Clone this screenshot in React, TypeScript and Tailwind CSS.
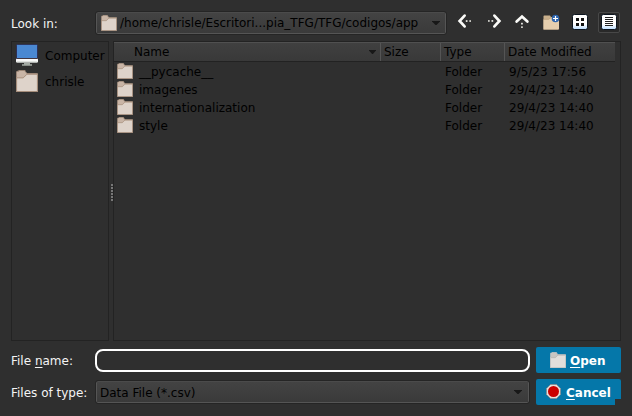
import React from "react";

function Folder({ size, light = false }: { size: number; light?: boolean }) {
  const edge = light ? "#c9c6c4" : "#a58d7b";
  return (
    <svg width={size} height={size} viewBox="0 0 16 16" className="block shrink-0">
      <path d="M.4 15.6V1.4Q.4.9 1 .9H2V.3H6.6V.9L8 2.6H15.6V15.6Z" fill={light ? "#c9c5c2" : "#c9b5a6"} stroke={edge} strokeWidth=".6" />
      <path d="M.7 6H5.3L8 3.4H15.4V15.4H.7Z" fill={light ? "#e2dedb" : "#ded3ca"} />
      <path d="M.7 5.7H5.2L7.9 3.1H15.5" fill="none" stroke={light ? "#b5b1ae" : "#a58d7b"} strokeWidth=".6" />
      <path d="M.4 5V15.6H15.6V3" fill="none" stroke={edge} strokeWidth=".8" />
    </svg>
  );
}

function Computer() {
  return (
    <svg width="22" height="22" viewBox="0 0 22 22" className="block shrink-0">
      <rect x=".5" y=".4" width="21" height="17" rx="1" fill="#4a88d2" stroke="#29264a" strokeWidth=".8" />
      <rect x="0" y="14.6" width="22" height="4" rx=".8" fill="#fafafa" />
      <rect x=".4" y="14" width="21.2" height=".9" fill="#37252c" />
      <path d="M.5 17.6H21.5L21 18.6H1Z" fill="#c8cec8" />
      <path d="M8 19H14V20.2H16V21.8H6V20.2H8Z" fill="#a4aba4" />
    </svg>
  );
}

function Arrow({ turn }: { turn: string }) {
  return (
    <svg width="16" height="16" viewBox="0 0 16 16" className={"block " + turn}>
      <path d="M7.6 2.6 2.6 8 7.6 13.4" fill="none" stroke="#fbfbf8" strokeWidth="2.7" strokeLinecap="round" />
      <rect x="8.8" y="7.2" width="1.7" height="1.7" fill="#f3f3ee" />
      <rect x="12.3" y="7.2" width="1.7" height="1.7" fill="#d8d8d2" />
    </svg>
  );
}

function NewFolder() {
  return (
    <svg width="17" height="16" viewBox="0 0 17 16" className="block">
      <path d="M.5 15.5V2.2Q.5 1.4 1.2 1.4H7L8 3H15.7V15.5Z" fill="#c9b08c" />
      <path d="M.5 15.5V5.5H5.8L8.4 3.8H16V14.6Q16 15.5 15 15.5Z" fill="#e5ceae" />
      <path d="M.6 5.3H5.7L8 3.6" stroke="#b69a77" strokeWidth=".6" fill="none" />
      <circle cx="12.5" cy="4.5" r="3.8" fill="#2d64ad" />
      <path d="M12.5 2V7M10 4.5H15" stroke="#fff" strokeWidth="1.2" />
    </svg>
  );
}

function ViewIcon({ detail = false }: { detail?: boolean }) {
  return (
    <svg width="16" height="16" viewBox="0 0 16 16" className="block">
      <defs>
        <linearGradient id={detail ? "pageDetail" : "pageGrid"} x1="0" y1="0" x2="0" y2="1">
          <stop offset=".65" stopColor="#fff" />
          <stop offset="1" stopColor="#b8dcff" />
        </linearGradient>
      </defs>
      <rect x=".5" y=".5" width="15" height="15" rx="1.8" fill={detail ? "url(#pageDetail)" : "url(#pageGrid)"} stroke="#0c151f" />
      {detail ? (
        <path d="M4 3.5H12M4 5.5H12M4 7.5H12M4 9.5H12M4 11.5H12" stroke="#222" />
      ) : (
        <path d="M4 4H7V7H4ZM9 4H12V7H9ZM4 9H7V12H4ZM9 9H12V12H9Z" fill="#111" />
      )}
    </svg>
  );
}

function Caret({ small = false }: { small?: boolean }) {
  return (
    <svg width={small ? 7 : 8} height="4" viewBox="0 0 8 4" preserveAspectRatio="none" className="block shrink-0">
      <path d="M0 0H8V.6L4.5 4H3.5L0 .6Z" fill="#181818" />
    </svg>
  );
}

const combo = "flex items-center rounded-[2px] border border-[#555] border-t-[#4b4b4b] bg-gradient-to-b from-[#434343] to-[#3a3a3a] outline outline-1 outline-[#252525] text-black";
const mnemonic = "underline decoration-1 underline-offset-2 [text-decoration-skip-ink:none]";

const rows = [
  ["__pycache__", "9/5/23 17:56"],
  ["imagenes", "29/4/23 14:40"],
  ["internationalization", "29/4/23 14:40"],
  ["style", "29/4/23 14:40"],
];

export default function App() {
  return (
    <div className="flex h-[416px] w-[632px] flex-col overflow-hidden bg-[#2f2f2f] pl-[11px] pr-[11px] pt-[9px] font-['DejaVu_Sans',sans-serif] text-[12px] leading-[18px] whitespace-nowrap text-black">
      <div className="flex h-[27px] items-center">
        <div className="w-[85px] pt-[2px] text-[#f4f4f4]">Look in:</div>
        <div className={combo + " mt-px h-[22px] w-[350px] pl-1 pr-[5px]"}>
          <Folder size={16} />
          <span className="ml-[3px] flex-1">/home/chrisle/Escritori...pia_TFG/TFG/codigos/app</span>
          <Caret />
        </div>
        <div className="ml-[11px] flex items-start self-start pt-[3px]">
          <div className="pt-px"><Arrow turn="" /></div>
          <div className="ml-[13px] pt-px"><Arrow turn="rotate-180" /></div>
          <div className="ml-[12px] pt-[2px]"><Arrow turn="rotate-90" /></div>
          <div className="ml-[13px] pt-[2px]"><NewFolder /></div>
          <div className="ml-[12px] pt-[2px]"><ViewIcon /></div>
          <div className="ml-[10px] flex h-[21px] w-[22px] justify-center rounded-[2px] border border-[#484848] bg-[#292929] pt-px">
            <ViewIcon detail />
          </div>
        </div>
      </div>

      <div className="mt-[5px] flex h-[300px]">
        <div className="w-[98px] border border-[#232323] pl-1 pt-[2px]">
          <div className="flex h-[26px]">
            <Computer />
            <span className="ml-[7px] pt-[3px]">Computer</span>
          </div>
          <div className="flex h-[26px]">
            <Folder size={22} />
            <span className="ml-[7px] pt-[3px]">chrisle</span>
          </div>
        </div>
        <div className="flex w-1 flex-col items-end justify-center gap-px pt-[2px]">
          {[0, 1, 2, 3, 4, 5].map((i) => (
            <div key={i} className="h-[2px] w-[2px] bg-[#777]" />
          ))}
        </div>
        <div className="w-[508px] border border-[#232323]">
          <div className="flex h-[20px] w-[501px] border-t border-b border-t-[#505050] border-b-[#222] bg-gradient-to-b from-[#404040] to-[#393939]">
            <div className="flex w-[267px] items-center justify-between border-r border-[#555] pl-5 pr-1">
              <span>Name</span>
              <Caret small />
            </div>
            <div className="w-[60px] border-r border-[#555] pl-[3px]">Size</div>
            <div className="w-[64px] border-r border-[#555] pl-[3px]">Type</div>
            <div className="pl-[3px]">Date Modified</div>
          </div>
          {rows.map(([name, date]) => (
            <div key={name} className="flex h-[18px] items-center pl-[3px]">
              <Folder size={16} />
              <span className="w-[306px] pl-[6px] pt-px">{name}</span>
              <span className="ml-[6px] w-[64px] pt-px">Folder</span>
              <span className="pt-px">{date}</span>
            </div>
          ))}
        </div>
      </div>

      <div className="mt-[6px] flex h-[26px] items-center">
        <div className="w-[84px] pt-[2px] text-[#f4f4f4]">File <span className={mnemonic}>n</span>ame:</div>
        <div className="h-[23px] w-[435px] rounded-[8px] border-2 border-white" />
        <div className="ml-[6px] flex h-[26px] w-[85px] items-center rounded-[2px] bg-[#0577a9] pl-[14px] font-bold text-white">
          <Folder size={16} light />
          <span className="ml-[4px] pt-px"><span className={mnemonic}>O</span>pen</span>
        </div>
      </div>

      <div className="mt-[6px] flex h-[26px] items-center">
        <div className="w-[85px] pt-[2px] text-[#f4f4f4]">Files of type:</div>
        <div className={combo + " h-[22px] w-[433px] pl-[3px] pr-[6px]"}>
          <span className="flex-1 pt-px">Data File (*.csv)</span>
          <Caret />
        </div>
        <div className="relative ml-[7px] flex h-[26px] w-[85px] items-center rounded-[2px] bg-[#0577a9] pl-[10px] font-bold text-white">
          <svg width="15" height="15" viewBox="0 0 15 15" className="-mt-px block">
            <path d="M4.5.5H10.5L14.5 4.5V10.5L10.5 14.5H4.5L.5 10.5V4.5Z" fill="#e5dfdc" stroke="#8e8381" strokeWidth=".6" />
            <circle cx="7.5" cy="7.5" r="5.5" fill="#cb0000" />
          </svg>
          <span className="ml-[5px] pt-px"><span className={mnemonic}>C</span>ancel</span>
          <div className="absolute right-0 bottom-0 h-[6px] w-[6px] bg-[#2f2f2f]" />
        </div>
      </div>
    </div>
  );
}
